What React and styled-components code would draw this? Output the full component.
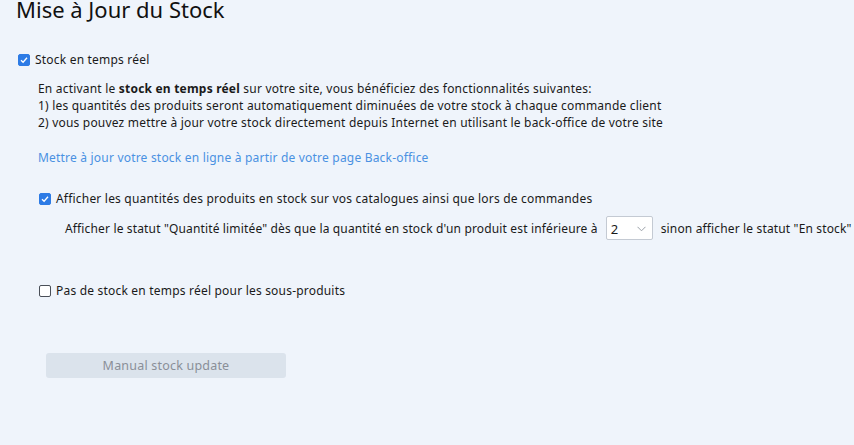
import React from "react";
import styled, { createGlobalStyle } from "styled-components";

const Global = createGlobalStyle`
  html, body { margin: 0; padding: 0; background: #eff4fb; }
  body { font-family: "Noto Sans", "Open Sans", sans-serif; color: #1a1a1a; }
`;

const Page = styled.div`
  width: 854px;
  height: 445px;
  overflow: hidden;
  background: #eff4fb;
  box-sizing: border-box;
  padding: 0 0 0 16px;
  font-size: 12px;
  letter-spacing: 0.2px;
`;

const Title = styled.h1`
  margin: -6px 0 0 0;
  font-size: 22px;
  font-weight: 400;
  line-height: 30px;
  letter-spacing: 0;
  color: #111;
`;

const CheckRow = styled.label`
  display: flex;
  align-items: center;
  gap: 5px;
  margin: ${(p) => p.$m || "0"};
  line-height: 17px;
`;

const Box = styled.span`
  width: 12px;
  height: 12px;
  box-sizing: border-box;
  border-radius: 2px;
  flex: none;
  display: inline-flex;
  align-items: center;
  justify-content: center;
  background: ${(p) => (p.$on ? "#2d7be5" : "#fff")};
  border: 1px solid ${(p) => (p.$on ? "#2d7be5" : "#4a4f58")};
`;

const Check = ({ on }) => (
  <Box $on={on}>
    {on && (
      <svg width="10" height="10" viewBox="0 0 10 10">
        <path d="M2 5.2 L4.1 7.2 L8 2.8" fill="none" stroke="#fff" strokeWidth="1.3" />
      </svg>
    )}
  </Box>
);

const Indent = styled.div`
  padding-left: 22px;
`;

const Para = styled.p`
  margin: 12px 0 0 0;
  line-height: 17px;
`;

const Link = styled.a`
  display: block;
  margin-top: 18px;
  color: #4a91e2;
  text-decoration: none;
  line-height: 17px;
`;

const LimitRow = styled.div`
  display: flex;
  align-items: center;
  gap: 8px;
  margin: 9px 0 0 27px;
  white-space: nowrap;
  letter-spacing: 0.15px;
`;

const Select = styled.div`
  width: 47px;
  height: 24px;
  box-sizing: border-box;
  border: 1px solid #c4cad3;
  border-radius: 2px;
  background: #fff;
  display: flex;
  align-items: center;
  justify-content: space-between;
  padding: 2px 6px 0 4px;
  font-size: 13px;
`;

const Button = styled.button`
  display: block;
  margin: 54px 0 0 8px;
  width: 240px;
  height: 25px;
  border: none;
  border-radius: 3px;
  background: #dbe3ec;
  color: #8a8f98;
  font-family: inherit;
  font-size: 12.5px;
  letter-spacing: 0.2px;
`;

export default function App() {
  return (
    <Page>
      <Global />
      <Title>Mise à Jour du Stock</Title>
      <CheckRow $m="27px 0 0 2px">
        <Check on />
        Stock en temps réel
      </CheckRow>
      <Indent>
        <Para>
          En activant le <b>stock en temps réel</b> sur votre site, vous bénéficiez des fonctionnalités suivantes:
          <br />
          1) les quantités des produits seront automatiquement diminuées de votre stock à chaque commande client
          <br />
          2) vous pouvez mettre à jour votre stock directement depuis Internet en utilisant le back-office de votre site
        </Para>
        <Link href="#">Mettre à jour votre stock en ligne à partir de votre page Back-office</Link>
        <CheckRow $m="24px 0 0 1px">
          <Check on />
          Afficher les quantités des produits en stock sur vos catalogues ainsi que lors de commandes
        </CheckRow>
        <LimitRow>
          Afficher le statut "Quantité limitée" dès que la quantité en stock d'un produit est inférieure à
          <Select>
            <span>2</span>
            <svg width="9" height="6" viewBox="0 0 9 6">
              <path d="M0.5 0.8 L4.5 4.8 L8.5 0.8" fill="none" stroke="#9aa0a8" strokeWidth="1" />
            </svg>
          </Select>
          sinon afficher le statut "En stock"
        </LimitRow>
        <CheckRow $m="42px 0 0 1px">
          <Check />
          Pas de stock en temps réel pour les sous-produits
        </CheckRow>
        <Button>Manual stock update</Button>
      </Indent>
    </Page>
  );
}
